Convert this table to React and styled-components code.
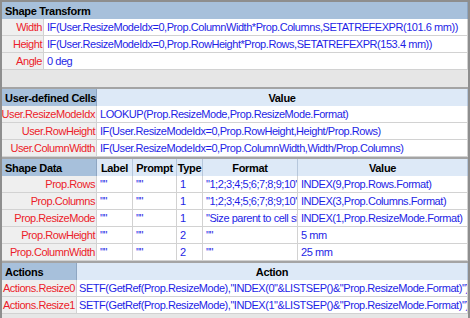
import React from "react";
import styled, { createGlobalStyle } from "styled-components";

const red = "#ec1c2a";
const blue = "#1e1ee6";
const headBlue = "#a7c0db";
const headLight = "#dde9f7";
const line = "#d2d2d2";

const GlobalStyle = createGlobalStyle`
  html, body {
    margin: 0;
    padding: 0;
    background: #ffffff;
  }
  body {
    font-family: "Liberation Sans", Arial, sans-serif;
    font-size: 11px;
    letter-spacing: -0.45px;
  }
`;

const Sheet = styled.div`
  width: 470px;
  height: 318px;
  box-sizing: border-box;
  overflow: hidden;
  border: 2px solid #8e8e8e;
  border-bottom: none;
  background: #e6e6e6;
`;

const Section = styled.div`
  display: grid;
  grid-template-columns: ${({ cols }) => cols};
  grid-auto-rows: 17px;
  border-top: ${({ first }) => (first ? "none" : "2px solid #a4a4a4")};
  background: #e6e6e6;
`;

const Head = styled.div`
  box-sizing: border-box;
  height: ${({ tall }) => (tall ? 19 : 18)}px;
  display: flex;
  align-items: center;
  padding: 0 3px;
  font-weight: bold;
  letter-spacing: -0.3px;
  color: #000;
  white-space: nowrap;
  overflow: hidden;
  background: ${headBlue};
  border-bottom: 1px solid #8ea6c2;
  border-right: 1px solid #8ea6c2;
  grid-column: ${({ span }) => (span ? "1 / -1" : "auto")};
`;

const ColHead = styled(Head)`
  justify-content: center;
  background: ${headLight};
  border-bottom: 1px solid #b6c7dc;
  border-right: 1px solid #b6c7dc;
`;

const Name = styled.div`
  box-sizing: border-box;
  display: flex;
  align-items: center;
  justify-content: flex-end;
  padding: 0 1px 0 0;
  color: ${red};
  background: #efefef;
  border-right: 1px solid ${line};
  border-bottom: 1px solid ${line};
  white-space: nowrap;
  overflow: hidden;
`;

const Cell = styled.div`
  box-sizing: border-box;
  display: flex;
  align-items: center;
  padding: 0 1px 0 ${({ tight }) => (tight ? 2 : 3)}px;
  color: ${blue};
  background: #fff;
  border-right: 1px solid ${line};
  border-bottom: 1px solid ${line};
  white-space: nowrap;
  overflow: hidden;
`;

const Filler = styled.div`
  grid-column: 1 / -1;
  height: 15px;
  background: #e6e6e6;
`;

const transform = [
  ["Width", "IF(User.ResizeModeIdx=0,Prop.ColumnWidth*Prop.Columns,SETATREFEXPR(101.6 mm))"],
  ["Height", "IF(User.ResizeModeIdx=0,Prop.RowHeight*Prop.Rows,SETATREFEXPR(153.4 mm))"],
  ["Angle", "0 deg"],
];

const userCells = [
  ["User.ResizeModeIdx", "LOOKUP(Prop.ResizeMode,Prop.ResizeMode.Format)"],
  ["User.RowHeight", "IF(User.ResizeModeIdx=0,Prop.RowHeight,Height/Prop.Rows)"],
  ["User.ColumnWidth", "IF(User.ResizeModeIdx=0,Prop.ColumnWidth,Width/Prop.Columns)"],
];

const shapeData = [
  ["Prop.Rows", '""', '""', "1", '"1;2;3;4;5;6;7;8;9;10"', "INDEX(9,Prop.Rows.Format)"],
  ["Prop.Columns", '""', '""', "1", '"1;2;3;4;5;6;7;8;9;10"', "INDEX(3,Prop.Columns.Format)"],
  ["Prop.ResizeMode", '""', '""', "1", '"Size parent to cell size;Size cells to parent"', "INDEX(1,Prop.ResizeMode.Format)"],
  ["Prop.RowHeight", '""', '""', "2", '""', "5 mm"],
  ["Prop.ColumnWidth", '""', '""', "2", '""', "25 mm"],
];

const actions = [
  ["Actions.Resize0", 'SETF(GetRef(Prop.ResizeMode),"INDEX(0"&LISTSEP()&"Prop.ResizeMode.Format)")'],
  ["Actions.Resize1", 'SETF(GetRef(Prop.ResizeMode),"INDEX(1"&LISTSEP()&"Prop.ResizeMode.Format)")'],
];

const App = () => (
  <>
    <GlobalStyle />
    <Sheet>
      <Section first cols="42px 1fr">
        <Head span>Shape Transform</Head>
        {transform.map(([n, v]) => (
          <React.Fragment key={n}>
            <Name>{n}</Name>
            <Cell>{v}</Cell>
          </React.Fragment>
        ))}
        <Filler />
      </Section>

      <Section cols="95px 1fr">
        <Head tall>User-defined Cells</Head>
        <ColHead tall>Value</ColHead>
        {userCells.map(([n, v]) => (
          <React.Fragment key={n}>
            <Name>{n}</Name>
            <Cell>{v}</Cell>
          </React.Fragment>
        ))}
      </Section>

      <Section cols="95px 36px 44px 26px 95px 1fr">
        <Head tall>Shape Data</Head>
        <ColHead tall>Label</ColHead>
        <ColHead tall>Prompt</ColHead>
        <ColHead tall>Type</ColHead>
        <ColHead tall>Format</ColHead>
        <ColHead tall>Value</ColHead>
        {shapeData.map(([n, ...vals]) => (
          <React.Fragment key={n}>
            <Name>{n}</Name>
            {vals.map((v, i) => (
              <Cell key={i}>{v}</Cell>
            ))}
          </React.Fragment>
        ))}
      </Section>

      <Section cols="75px 1fr">
        <Head>Actions</Head>
        <ColHead>Action</ColHead>
        {actions.map(([n, v]) => (
          <React.Fragment key={n}>
            <Name>{n}</Name>
            <Cell tight>{v}</Cell>
          </React.Fragment>
        ))}
      </Section>
    </Sheet>
  </>
);

export default App;
